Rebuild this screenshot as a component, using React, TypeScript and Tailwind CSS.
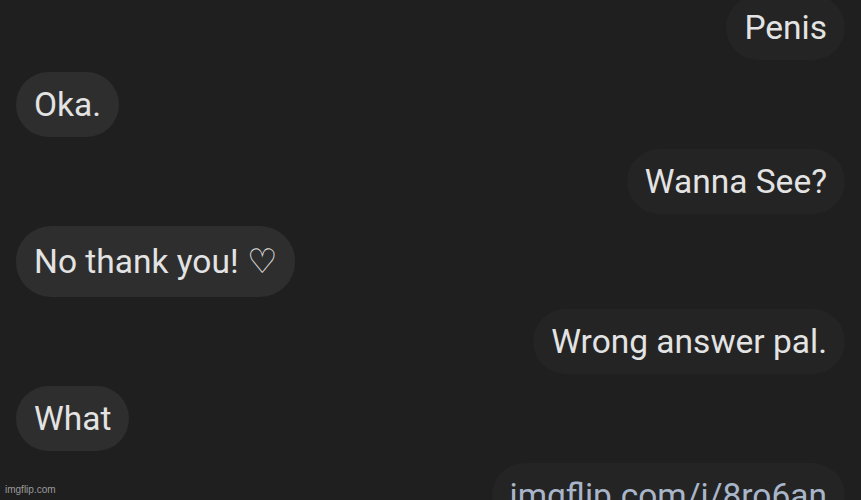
import React from "react";

type Msg = { text: string; side: "l" | "r"; link?: boolean; tall?: boolean };

const msgs: Msg[] = [
  { text: "Penis", side: "r" },
  { text: "Oka.", side: "l" },
  { text: "Wanna See?", side: "r" },
  { text: "No thank you! \u2661", side: "l", tall: true },
  { text: "Wrong answer pal.", side: "r" },
  { text: "What", side: "l" },
  { text: "imgflip.com/i/8ro6an", side: "r", link: true },
];

export default function App() {
  return (
    <div
      className="relative w-[861px] h-[500px] overflow-hidden bg-[#1f1f1f]"
      style={{ fontFamily: "Roboto, 'Noto Sans', sans-serif" }}
    >
      <div className="flex flex-col gap-[12px] px-[16px] -mt-[5px]">
        {msgs.map((m, i) => (
          <div
            key={i}
            className={m.side === "r" ? "flex justify-end" : "flex justify-start"}
          >
            <div
              className={
                (m.side === "r" ? "bg-[#242424] " : "bg-[#2e2e2e] ") +
                (m.link ? "text-[#a9b6c9] " : "text-[#e3e3e3] ") +
                (m.tall ? "py-[17px] " : "py-[14px] ") +
                "rounded-[35px] px-[18px] text-[33.5px] leading-[37px] whitespace-nowrap"
              }
            >
              {m.text}
            </div>
          </div>
        ))}
      </div>
      <div className="absolute left-[5px] bottom-[3px] text-[10px] text-[#9a9a9a]" style={{ fontFamily: "'Liberation Sans', sans-serif" }}>
        imgflip.com
      </div>
    </div>
  );
}
